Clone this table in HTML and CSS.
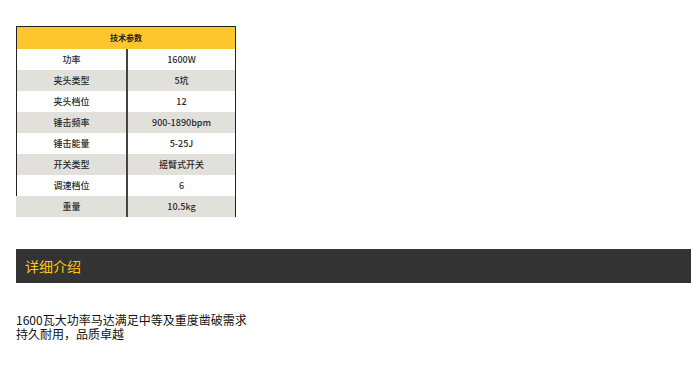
FILE: index.html
```html
<!DOCTYPE html>
<html>
<head>
<meta charset="utf-8">
<link rel="stylesheet" href="styles.css">
</head>
<body>
<div class="page">
  <div class="spec">
    <div class="spec-head">技术参数</div>
    <div class="spec-body">
      <div class="row"><div class="k">功率</div><div class="v">1600W</div></div>
      <div class="row gray"><div class="k">夹头类型</div><div class="v">5坑</div></div>
      <div class="row"><div class="k">夹头档位</div><div class="v">12</div></div>
      <div class="row gray"><div class="k">锤击频率</div><div class="v">900-1890bpm</div></div>
      <div class="row"><div class="k">锤击能量</div><div class="v">5-25J</div></div>
      <div class="row gray"><div class="k">开关类型</div><div class="v">摇臂式开关</div></div>
      <div class="row"><div class="k">调速档位</div><div class="v">6</div></div>
      <div class="row gray last"><div class="k">重量</div><div class="v">10.5kg</div></div>
    </div>
  </div>
  <div class="bar">详细介绍</div>
  <div class="desc">
    <p>1600瓦大功率马达满足中等及重度凿破需求</p>
    <p>持久耐用，品质卓越</p>
  </div>
</div>
</body>
</html>
```
FILE: styles.css
```css
html, body { margin: 0; padding: 0; background: #fff; }
.page { padding: 26px 0 0 16px; font-family: "Noto Sans CJK SC", "Noto Sans", sans-serif; }
.spec { width: 220px; border-top: 1px solid #222; }
.spec-head {
  height: 22px; background: #fcc62c; border-left: 1px solid #222; border-right: 1px solid #222;
  display: flex; align-items: center; justify-content: center;
  font-size: 8px; font-weight: bold; color: #222; line-height: 1;
}
.spec-body { border-right: 1px solid #222; }
.row { display: flex; height: 21px; border-left: 1px solid #222; }
.row.gray { background: #e1e0db; }
.row.last { border-left-color: transparent; }
.k, .v { display: flex; align-items: center; justify-content: center; font-size: 9px; font-weight: 500; color: #2a2a2a; line-height: 1; }
.k { width: 109px; border-right: 2px solid #444; }
.v { flex: 1; }
.bar {
  margin-top: 32px; height: 34px; background: #333333; color: #ffc610;
  font-size: 14px; display: flex; align-items: center; padding-left: 9px;
  font-family: "Noto Sans CJK SC", sans-serif;
}
.desc { margin-top: 30px; font-size: 12px; color: #111; font-family: "Noto Sans CJK SC", sans-serif; }
.desc p { margin: 0; line-height: 14px; }
```
